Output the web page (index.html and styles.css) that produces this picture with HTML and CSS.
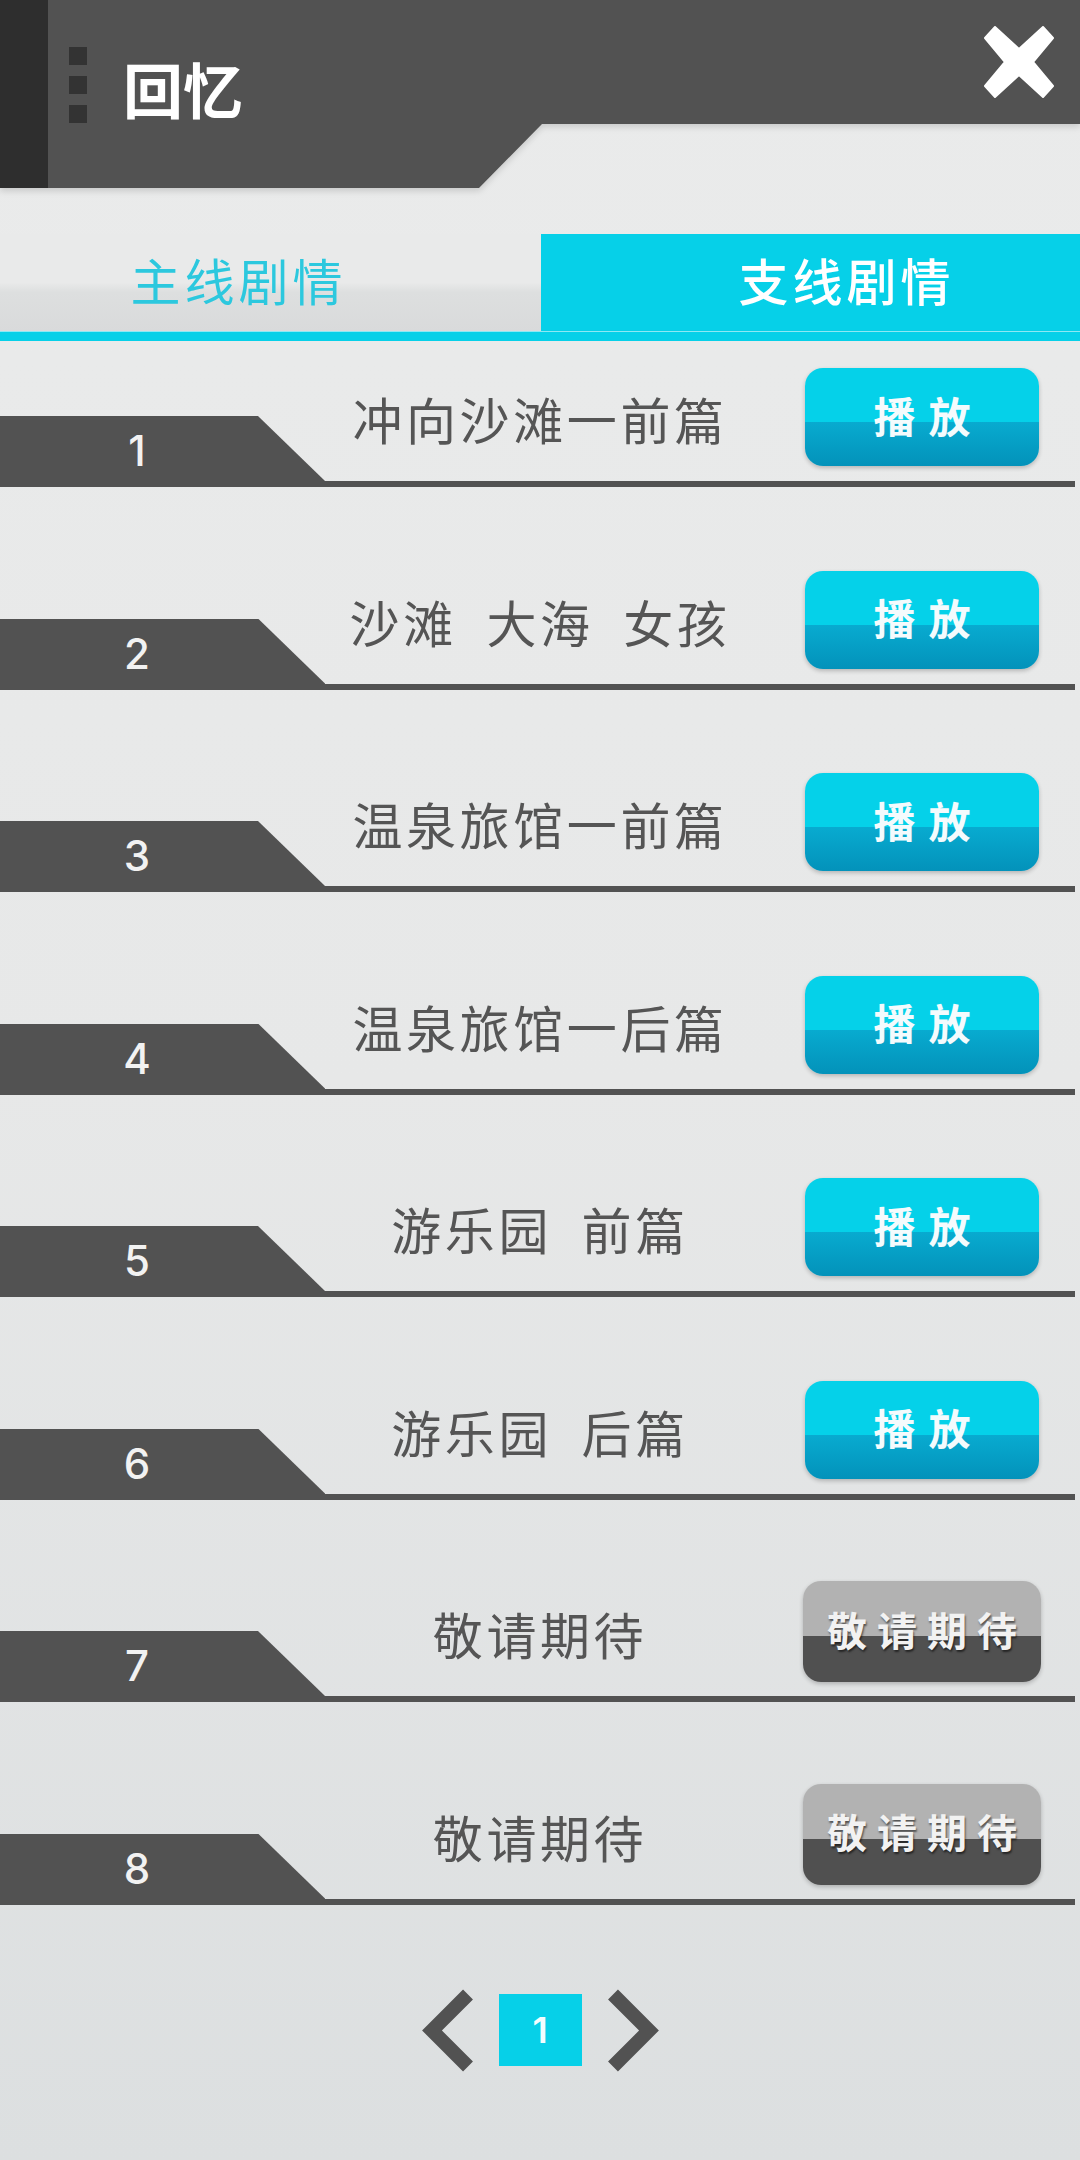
FILE: index.html
```html
<!DOCTYPE html>
<html lang="zh">
<head>
  <meta charset="UTF-8">
  <title>回忆</title>
  <link rel="stylesheet" href="styles.css">
</head>
<body>
  <div class="header-wrap">
    <header class="header">
      <div class="strip"></div>
      <div class="dots"><i></i><i></i><i></i></div>
      <h1 class="title">回忆</h1>
      <svg class="close" viewBox="0 0 70 72"><polygon points="11,1 35,23 59,1 69,12 49,36 69,60 59,71 35,49 11,71 1,60 21,36 1,12"/></svg>
    </header>
  </div>

  <div class="tabs">
    <div class="tab">主线剧情</div>
    <div class="tab active">支线剧情</div>
  </div>

  <div class="list">
    <div class="row"><span class="tag">1</span><span class="name">冲向沙滩一前篇</span><button class="btn">播放</button></div>
    <div class="row"><span class="tag">2</span><span class="name">沙滩&nbsp;&nbsp;大海&nbsp;&nbsp;女孩</span><button class="btn">播放</button></div>
    <div class="row"><span class="tag">3</span><span class="name">温泉旅馆一前篇</span><button class="btn">播放</button></div>
    <div class="row"><span class="tag">4</span><span class="name">温泉旅馆一后篇</span><button class="btn">播放</button></div>
    <div class="row"><span class="tag">5</span><span class="name">游乐园&nbsp;&nbsp;前篇</span><button class="btn">播放</button></div>
    <div class="row"><span class="tag">6</span><span class="name">游乐园&nbsp;&nbsp;后篇</span><button class="btn">播放</button></div>
    <div class="row"><span class="tag">7</span><span class="name">敬请期待</span><button class="btn locked">敬请期待</button></div>
    <div class="row"><span class="tag">8</span><span class="name">敬请期待</span><button class="btn locked">敬请期待</button></div>
  </div>

  <div class="pager">
    <svg class="arrow" viewBox="0 0 51 85"><polyline points="46,6.500 10,42.500 46,78.500"/></svg>
    <div class="page">1</div>
    <svg class="arrow" viewBox="0 0 51 85"><polyline points="5,6.500 41,42.500 5,78.500"/></svg>
  </div>
</body>
</html>
```

FILE: styles.css
```css
html, body {
  margin: 0;
  padding: 0;
}
body {
  width: 1080px;
  height: 2160px;
  overflow: hidden;
  background: linear-gradient(#eaebeb, #e7e8e8 50%, #dcdfe0);
  font-family: "Noto Sans CJK SC", "Noto Sans", sans-serif;
  color: #555;
}

/* header */
.header-wrap {
  filter: drop-shadow(0 3px 3px rgba(0, 0, 0, 0.14));
}
.header {
  height: 188px;
  display: flex;
  align-items: flex-start;
  background: #525252;
  clip-path: polygon(0 0, 1080px 0, 1080px 124px, 542px 124px, 479px 188px, 0 188px);
}
.strip {
  width: 48px;
  height: 188px;
  background: #2e2e2e;
}
.dots {
  display: flex;
  flex-direction: column;
  gap: 11px;
  margin: 47px 0 0 21px;
}
.dots i {
  display: block;
  width: 18px;
  height: 18px;
  background: #333;
}
.title {
  margin: 46px 0 0 36px;
  font-size: 60px;
  line-height: 84px;
  font-weight: 700;
  color: #fff;
}
.close {
  width: 70px;
  height: 72px;
  margin: 26px 26px 0 auto;
  fill: #fff;
  stroke: #fff;
  stroke-width: 2;
  stroke-linejoin: round;
}

/* tabs */
.tabs {
  display: flex;
  height: 98px;
  margin-top: 46px;
  border-bottom: 9px solid #06d0e8;
}
.tab {
  width: 541px;
  padding: 0 64px 7px 0;
  box-sizing: border-box;
  text-align: center;
  font-size: 50px;
  line-height: 91px;
  letter-spacing: 4px;
  color: #2cc8de;
  background: linear-gradient(#e9eaea 50%, #dddfdf 60%, #d9dadb);
  border-bottom: 1px solid #8ee8f3;
}
.tab.active {
  width: 539px;
  padding: 0 0 7px 72px;
  font-weight: 500;
  color: #fff;
  background: #06d0e8;
}

/* rows */
.list {
  display: flex;
  flex-direction: column;
  gap: 80.500px;
  padding-top: 24px;
}
.row {
  width: 1075px;
  height: 122px;
  box-sizing: border-box;
  display: flex;
  align-items: flex-end;
  border-bottom: 6px solid #525252;
}
.tag {
  width: 325px;
  height: 71px;
  margin-bottom: -6px;
  box-sizing: border-box;
  padding: 12px 51px 0 0;
  font-family: "Inter", sans-serif;
  font-size: 42px;
  line-height: 46px;
  font-weight: 500;
  text-align: center;
  color: #f2f2f2;
  background: #525252;
  clip-path: polygon(0 0, 258px 0, 325px 65px, 325px 71px, 0 71px);
}
.name {
  width: 430px;
  margin-bottom: 31px;
  text-align: center;
  font-size: 50px;
  line-height: 64px;
  letter-spacing: 3.600px;
  white-space: nowrap;
  font-weight: 400;
}
.btn {
  width: 234px;
  height: 98px;
  margin: 0 0 15px 50px;
  padding: 0 0 6px;
  border: none;
  border-radius: 18px;
  font-family: inherit;
  font-size: 42px;
  font-weight: 700;
  letter-spacing: 13px;
  text-indent: 13px;
  color: #f4fbfd;
  background: linear-gradient(#05d1e9 55%, #08abd0 55%, #0392ba);
  box-shadow: 0 2px 4px rgba(0, 0, 0, 0.22);
}
.btn.locked {
  width: 238px;
  height: 101px;
  margin: 0 -2px 14px 48px;
  letter-spacing: 10px;
  text-indent: 10px;
  font-size: 40px;
  color: #f2f2f2;
  text-shadow: 1px 2px 2px rgba(0, 0, 0, 0.55);
  background: linear-gradient(#b2b2b2 54%, #505050 54%);
}

/* pager */
.pager {
  display: flex;
  justify-content: center;
  align-items: center;
  gap: 26px;
  margin-top: 83px;
}
.arrow {
  width: 51px;
  height: 85px;
  fill: none;
  stroke: #525252;
  stroke-width: 14;
}
.page {
  width: 83px;
  height: 72px;
  text-align: center;
  font-family: "Inter", sans-serif;
  font-size: 36px;
  font-weight: 600;
  line-height: 72px;
  color: #f2fdff;
  background: #06d0e8;
}
```
